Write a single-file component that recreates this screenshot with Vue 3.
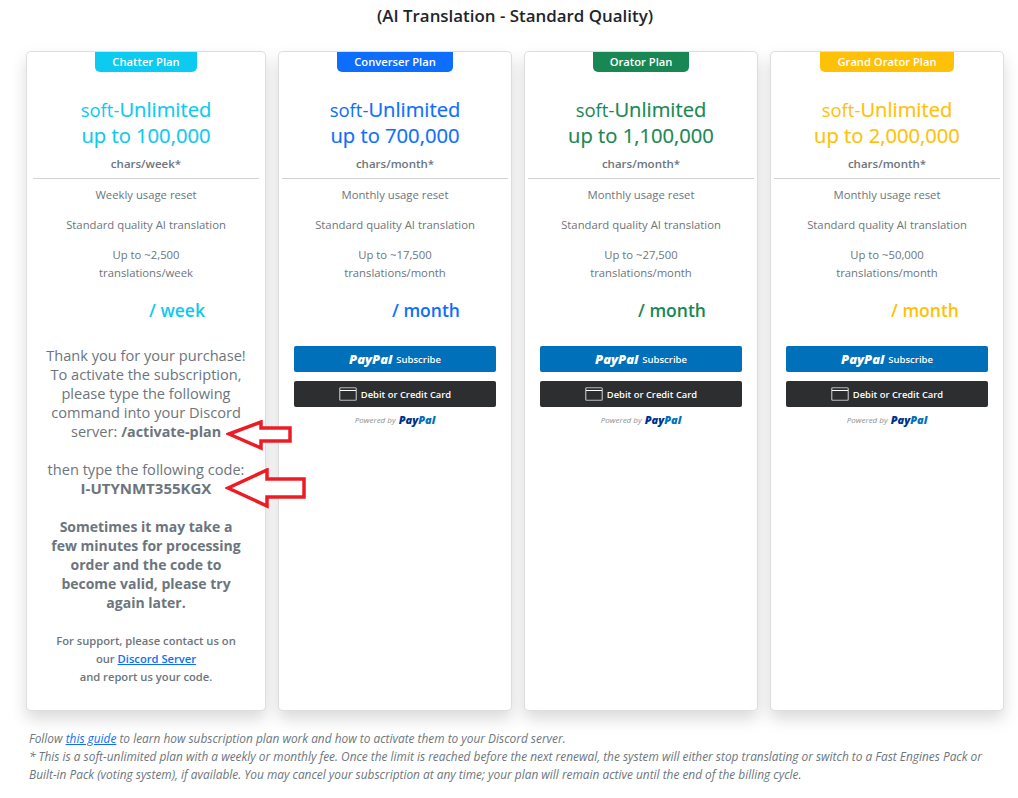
<template>
  <main class="page">
    <h1 class="heading">(AI Translation - Standard Quality)</h1>

    <section class="plans">
      <article
        v-for="(p, i) in plans"
        :key="p.name"
        class="card"
        :class="[p.tone, { first: i === 0 }]"
      >
        <div class="badge">{{ p.name }}</div>
        <h2 class="title"><span class="soft">soft-</span>Unlimited<br />up to {{ p.limit }}</h2>
        <div class="unit">chars/{{ p.period }}*</div>
        <hr class="rule" />
        <ul class="features">
          <li>{{ p.reset }} usage reset</li>
          <li>Standard quality AI translation</li>
          <li>Up to ~{{ p.count }}<br />translations/{{ p.period }}</li>
        </ul>
        <div class="price">/ {{ p.period }}</div>

        <div v-if="i === 0" class="thanks">
          <p>
            Thank you for your purchase!<br />
            To activate the subscription,<br />
            please type the following<br />
            command into your Discord<br />
            server: <b>/activate-plan</b>
          </p>
          <p>then type the following code:<br /><b class="code">I-UTYNMT355KGX</b></p>
          <p class="wait">
            Sometimes it may take a<br />
            few minutes for processing<br />
            order and the code to<br />
            become valid, please try<br />
            again later.
          </p>
          <p class="support">
            For support, please contact us on<br />
            our <a href="#">Discord Server</a><br />
            and report us your code.
          </p>
          <svg class="arrow arrow-a" width="70" height="32" viewBox="0 0 70 32">
            <path d="M3 14 L35 2 L35 8 L64 8 L64 21 L35 21 L35 28 Z" />
          </svg>
          <svg class="arrow arrow-b" width="84" height="42" viewBox="0 0 84 42">
            <path d="M3 20 L42 2 L42 11 L79 11 L79 29 L42 29 L42 38 Z" />
          </svg>
        </div>

        <div v-else class="pay">
          <button class="pp-btn" type="button">
            <span class="pp-logo">PayPal</span>
            <span class="pp-sub">Subscribe</span>
          </button>
          <button class="card-btn" type="button">
            <svg width="18" height="14" viewBox="0 0 18 14">
              <rect x="0.75" y="0.75" width="16.5" height="12.5" rx="1" fill="none" stroke="#b9b9b9" stroke-width="1.2" />
              <line x1="1" y1="3.5" x2="17" y2="3.5" stroke="#fff" stroke-width="1" />
            </svg>
            <span>Debit or Credit Card</span>
          </button>
          <div class="powered">
            <span>Powered by</span>
            <span class="mini"><i class="pp-dark">Pay</i><i class="pp-light">Pal</i></span>
          </div>
        </div>
      </article>
    </section>

    <footer class="notes">
      Follow <a href="#">this guide</a> to learn how subscription plan work and how to activate them to your Discord server.<br />
      * This is a soft-unlimited plan with a weekly or monthly fee. Once the limit is reached before the next renewal, the system will either stop translating or switch to a Fast Engines Pack or<br />
      Built-in Pack (voting system), if available. You may cancel your subscription at any time; your plan will remain active until the end of the billing cycle.
    </footer>
  </main>
</template>

<script setup>
const plans = [
  { name: 'Chatter Plan', tone: 'cyan', limit: '100,000', period: 'week', reset: 'Weekly', count: '2,500' },
  { name: 'Converser Plan', tone: 'blue', limit: '700,000', period: 'month', reset: 'Monthly', count: '17,500' },
  { name: 'Orator Plan', tone: 'green', limit: '1,100,000', period: 'month', reset: 'Monthly', count: '27,500' },
  { name: 'Grand Orator Plan', tone: 'yellow', limit: '2,000,000', period: 'month', reset: 'Monthly', count: '50,000' },
]
</script>

<style>
html,
body {
  margin: 0;
  background: #fff;
  overflow: hidden;
}
</style>

<style scoped>
.page {
  width: 1018px;
  height: 798px;
  box-sizing: border-box;
  padding: 0 14px 0 26px;
  font-family: "Open Sans", "Noto Sans", sans-serif;
  color: #6c757d;
  overflow: hidden;
}

.heading {
  margin: 0;
  padding-top: 5px;
  height: 51px;
  box-sizing: border-box;
  text-align: center;
  font-size: 16.9px;
  line-height: 22px;
  font-weight: 600;
  color: #212529;
}

.plans {
  display: grid;
  grid-template-columns: 240px 234px 234px 234px;
  gap: 12px;
  height: 660px;
}

.card {
  position: relative;
  box-sizing: border-box;
  border: 1px solid rgba(0, 0, 0, 0.13);
  border-radius: 5px;
  background: #fff;
  box-shadow: 0 8px 16px rgba(0, 0, 0, 0.15);
  display: flex;
  flex-direction: column;
  align-items: center;
  text-align: center;
}

.first {
  z-index: 1;
}

.cyan { --tone: #0dcaf0; }
.blue { --tone: #0d6efd; }
.green { --tone: #198754; }
.yellow { --tone: #ffc107; }

.badge {
  height: 20px;
  padding: 0 17px;
  border-radius: 0 0 5px 5px;
  background: var(--tone);
  color: #fff;
  font-size: 11.2px;
  line-height: 20px;
  font-weight: 600;
}

.title {
  margin: 24px 0 0;
  font-size: 20.2px;
  line-height: 26px;
  font-weight: 500;
  color: var(--tone);
  -webkit-text-stroke: 0.2px var(--tone);
}

.soft {
  font-weight: 400;
  font-size: 18.5px;
  line-height: 1;
  -webkit-text-stroke: 0;
}

.unit {
  margin-top: 7px;
  font-size: 11.5px;
  line-height: 18px;
  font-weight: 600;
}

.rule {
  width: 226px;
  margin: 5px 0 0;
  border: 0;
  border-top: 1px solid #d3d3d3;
}

.features {
  list-style: none;
  margin: 7px 0 0;
  padding: 0;
  font-size: 11.3px;
  line-height: 18px;
}

.features li {
  margin-bottom: 12px;
}

.price {
  align-self: stretch;
  margin-top: 4px;
  padding-left: 62px;
  box-sizing: border-box;
  font-size: 17.5px;
  line-height: 24px;
  font-weight: 600;
  color: var(--tone);
  text-align: center;
}

.yellow .price {
  padding-left: 76px;
}

.thanks {
  margin-top: 24px;
  font-size: 14.6px;
  line-height: 19px;
  width: 100%;
}

.thanks p {
  margin: 0 0 19px;
}

.thanks b {
  font-size: 14.3px;
  font-weight: 700;
}

.thanks .code {
  font-size: 15px;
}

.thanks .wait {
  font-size: 14px;
  font-weight: 700;
  margin-bottom: 20px;
}

.thanks .support {
  font-size: 11.2px;
  line-height: 18px;
  font-weight: 600;
  margin: 0;
}

a {
  color: #0d6efd;
  text-decoration: underline;
}

.arrow {
  position: absolute;
  fill: #fff;
  stroke: #ed1c24;
  stroke-width: 3.5;
}

.arrow-a {
  left: 199px;
  top: 368px;
}

.arrow-b {
  left: 198px;
  top: 416px;
}

.pay {
  width: 202px;
  margin-top: 24px;
  display: flex;
  flex-direction: column;
  gap: 9px;
}

.pp-btn,
.card-btn {
  height: 26px;
  border: 0;
  border-radius: 2px;
  padding: 0;
  color: #fff;
  font-family: inherit;
  display: flex;
  align-items: center;
  justify-content: center;
}

.pp-btn {
  background: #0070ba;
  gap: 4px;
}

.pp-logo {
  font-size: 13px;
  font-weight: 800;
  font-style: italic;
}

.pp-sub {
  font-size: 9.5px;
  font-weight: 600;
}

.card-btn {
  background: #2c2e2f;
  gap: 4px;
  font-size: 9.4px;
  font-weight: 600;
}

.powered {
  margin-top: -3px;
  display: flex;
  align-items: center;
  justify-content: center;
  gap: 3px;
  font-size: 8px;
  font-style: italic;
  color: #8a8f93;
  line-height: 14px;
}

.mini {
  font-size: 11px;
  font-weight: 800;
}

.pp-dark { color: #003087; }
.pp-light { color: #0070ba; }

.notes {
  margin: 18px 0 0 3px;
  font-size: 11.88px;
  line-height: 18px;
  font-style: italic;
  white-space: nowrap;
}
</style>
